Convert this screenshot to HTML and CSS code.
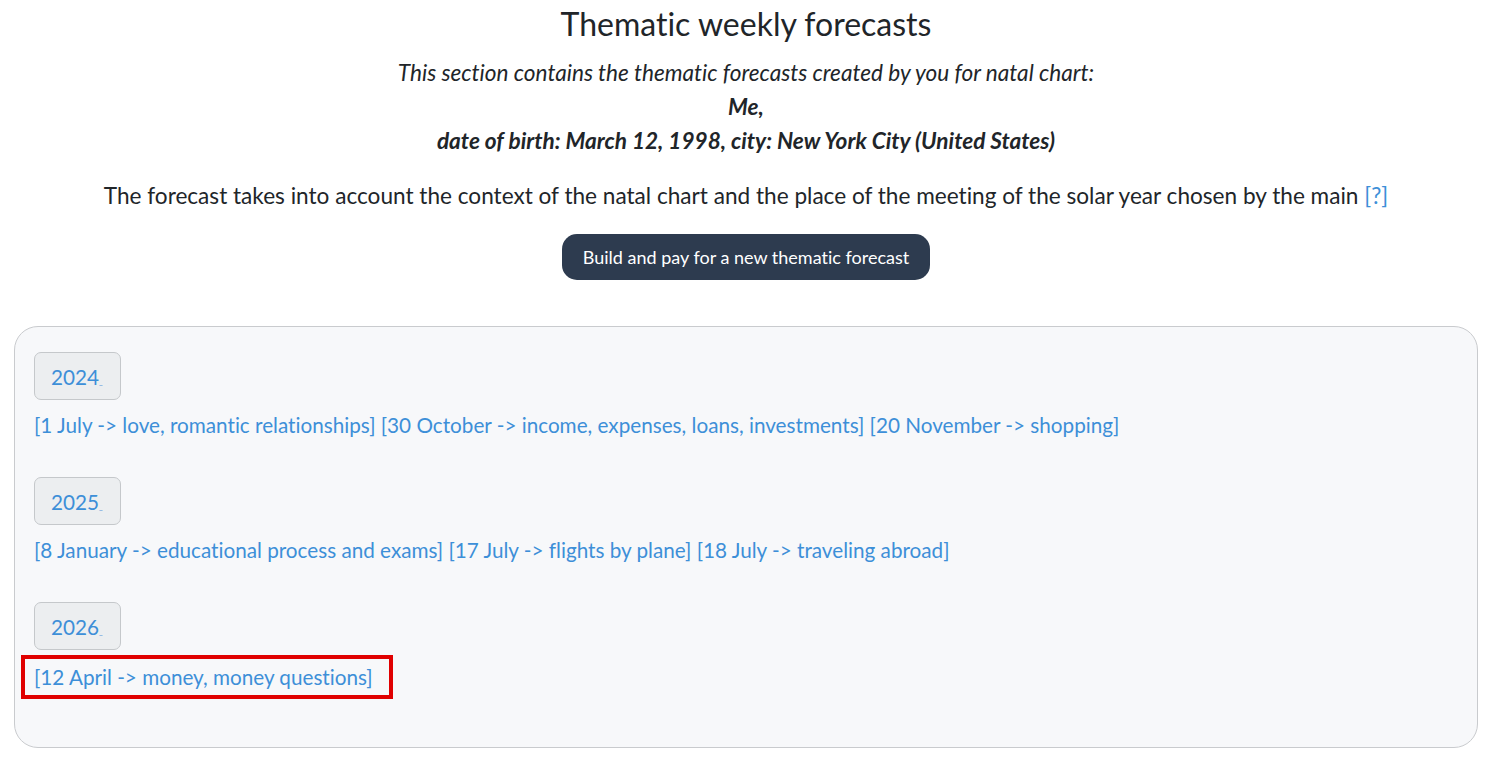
FILE: index.html
```html
<!DOCTYPE html>
<html lang="en">
<head>
  <meta charset="UTF-8" />
  <meta name="viewport" content="width=device-width, initial-scale=1.0"/>
  <title>Thematic weekly forecasts</title>
  <link rel="stylesheet" href="styles.css">
</head>
<body>

  <div class="header">
    <h1>Thematic weekly forecasts</h1>
    <p class="intro">This section contains the thematic forecasts created by you for natal chart:</p>
    <p class="chart-name">Me,</p>
    <p class="chart-name">date of birth: March 12, 1998, city: New York City (United States)</p>
    <p class="note">The forecast takes into account the context of the natal chart and the place of the meeting of the solar year chosen by the main <a href="#">[?]</a></p>
    <button class="build-btn">Build and pay for a new thematic forecast</button>
  </div>

  <div class="forecasts">
    <div class="year">
      <span class="year-btn">2024<span class="suffix">_</span></span>
      <div class="links">
        <a href="#">[1 July -&gt; love, romantic relationships]</a>
        <a href="#">[30 October -&gt; income, expenses, loans, investments]</a>
        <a href="#">[20 November -&gt; shopping]</a>
      </div>
    </div>

    <div class="year">
      <span class="year-btn">2025<span class="suffix">_</span></span>
      <div class="links">
        <a href="#">[8 January -&gt; educational process and exams]</a>
        <a href="#">[17 July -&gt; flights by plane]</a>
        <a href="#">[18 July -&gt; traveling abroad]</a>
      </div>
    </div>

    <div class="year">
      <span class="year-btn">2026<span class="suffix">_</span></span>
      <div class="links">
        <a href="#" class="marked">[12 April -&gt; money, money questions]</a>
      </div>
    </div>
  </div>

</body>
</html>
```

FILE: styles.css
```css
* {
  box-sizing: border-box;
  font-variant-ligatures: none;
  font-feature-settings: "liga" 0, "clig" 0, "dlig" 0;
}

body {
  margin: 0;
  padding: 0 9px 0 14px;
  font-family: Lato, "Open Sans", sans-serif;
  color: #212529;
  background: #fff;
}

a {
  color: #3d8fd8;
  text-decoration: none;
}

.header {
  text-align: center;
}

h1 {
  margin: 0;
  padding-top: 4px;
  font-size: 32px;
  font-weight: 400;
  line-height: 40px;
}

.intro {
  margin: 12px 0 0;
  font-size: 22.6px;
  font-style: italic;
  line-height: 34px;
}

.chart-name {
  margin: 0;
  font-size: 22.6px;
  font-style: italic;
  font-weight: 700;
  line-height: 34px;
}

.note {
  margin: 21px 0 0;
  font-size: 22.6px;
  line-height: 34px;
}

.build-btn {
  margin-top: 21px;
  height: 46px;
  padding: 0 21px;
  background: #2d3b4f;
  color: #fff;
  border: none;
  border-radius: 15px;
  font-family: inherit;
  font-size: 18px;
  cursor: pointer;
}

.forecasts {
  margin-top: 46px;
  background: #f7f8fa;
  border: 1px solid #c9cbce;
  border-radius: 24px;
  padding: 25px 19px 56px;
}

.year {
  margin-bottom: 38px;
}

.year:last-child {
  margin-bottom: 0;
}

.year-btn {
  display: inline-block;
  width: 87px;
  height: 48px;
  padding-left: 16px;
  line-height: 48px;
  font-size: 20.7px;
  color: #3d8fd8;
  background: #eceef0;
  border: 1px solid #c5c8cb;
  border-radius: 7px;
}

.suffix {
  font-size: 8px;
  vertical-align: baseline;
}

.links {
  margin-top: 11px;
  font-size: 20.7px;
  line-height: 28px;
}

.marked {
  display: inline-block;
  margin: -6px 0 -10px -13px;
  padding: 0 16px 0 9px;
  border: 4px solid #e00000;
  line-height: 36px;
}
```
